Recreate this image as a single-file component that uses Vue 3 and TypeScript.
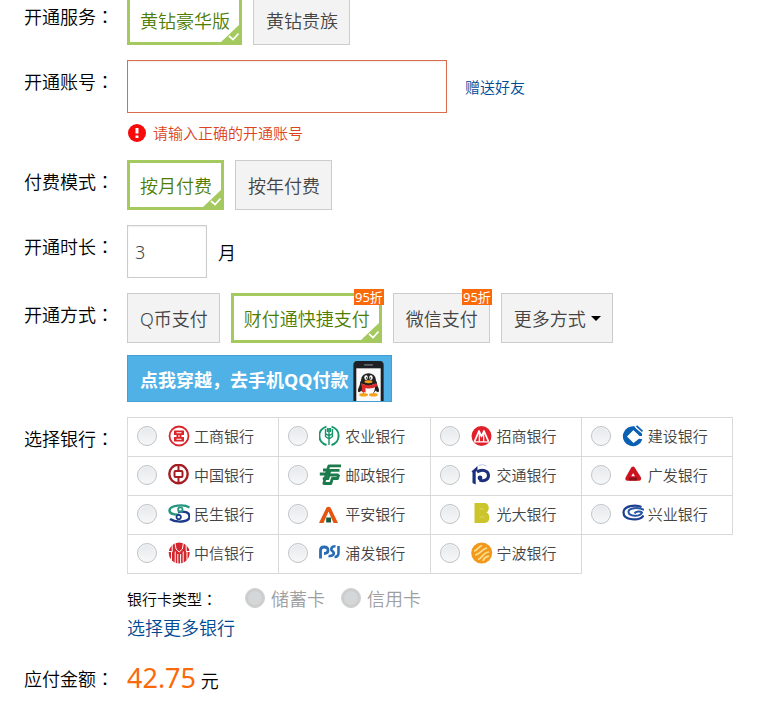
<script setup lang="ts">
import { ref } from 'vue'

interface Option {
  id: string
  label: string
  badge?: string
}

interface Shape {
  d: string
  fill?: string
  stroke?: string
  w?: number
}

interface Bank {
  id: string
  name: string
  icon: Shape[]
}

const services: Option[] = [
  { id: 'luxury', label: '黄钻豪华版' },
  { id: 'noble', label: '黄钻贵族' },
]
const modes: Option[] = [
  { id: 'month', label: '按月付费' },
  { id: 'year', label: '按年付费' },
]
const channels: Option[] = [
  { id: 'qcoin', label: 'Q币支付' },
  { id: 'tenpay', label: '财付通快捷支付', badge: '95折' },
  { id: 'wechat', label: '微信支付', badge: '95折' },
]

const circle = (cx: number, cy: number, r: number): string =>
  `M${cx - r} ${cy}a${r} ${r} 0 1 0 ${2 * r} 0a${r} ${r} 0 1 0 ${-2 * r} 0z`

const banks: Bank[] = [
  {
    id: 'icbc',
    name: '工商银行',
    icon: [
      { d: circle(11, 11, 9.5), stroke: '#d9252b', w: 1.8 },
      { d: 'M6 5.5h10v4.5h-2.5v2h2.5v4.5h-10v-4.5h2.5v-2h-2.5z', fill: '#d9252b' },
      { d: 'M8.5 7.8h5M8.5 14.2h5M11 10v2', stroke: '#fff', w: 1.1 },
    ],
  },
  {
    id: 'abc',
    name: '农业银行',
    icon: [
      { d: 'M7.5 1.6a9.5 9.5 0 0 0 0 18.4M12.5 1.6a9.5 9.5 0 0 1 0 18.4', stroke: '#16946b', w: 2 },
      { d: 'M10 3v17M6.5 4v4.5l3.5 2.5 3.5-2.5v-4.5M6.5 8.5v3l3.5 2.5 3.5-2.5v-3M8.5 3v4M11.5 3v4', stroke: '#16946b', w: 1.4 },
    ],
  },
  {
    id: 'cmb',
    name: '招商银行',
    icon: [
      { d: circle(10.5, 11, 10), fill: '#e0202a' },
      { d: 'M3.5 16.5l4.5-10.5 2.5 5.5 2.5-5.5 4.5 10.5', stroke: '#fff', w: 1.8 },
      { d: 'M8.3 9v7.5M12.7 9v7.5M3 16.8h15', stroke: '#fff', w: 1.2 },
    ],
  },
  {
    id: 'ccb',
    name: '建设银行',
    icon: [
      { d: 'M13 1.4a10 10 0 1 0 7.4 12.8l-3.4-.4-5.500 4.200-6.500-6.500 6.500-6.500 3 2.800z', fill: '#0b60b4' },
      { d: 'M11.500 1.500l8.500 7v2.500h-2.500l-6.500-6.500z', fill: '#0b60b4' },
      { d: 'M14.500 .8l6 5.500', stroke: '#0b60b4', w: 1.8 },
    ],
  },
  {
    id: 'boc',
    name: '中国银行',
    icon: [
      { d: circle(10.5, 10, 9.2), stroke: '#a51c20', w: 2.4 },
      { d: 'M7.5 7h6q1 0 1 1v4q0 1-1 1h-6q-1 0-1-1v-4q0-1 1-1z', stroke: '#a51c20', w: 2 },
      { d: 'M10.5 .5v6M10.5 13.5v6', stroke: '#a51c20', w: 2 },
    ],
  },
  {
    id: 'post',
    name: '邮政银行',
    icon: [
      { d: 'M22 1.8h-12l-1.500 4.200h-4.500M20.500 6.300h-9.500l-1.200 3.700h-9M19.500 11h-9.500l-1.200 3.700h-5', stroke: '#1c7a4c', w: 2.800 },
      { d: 'M8.500 5.500l-3.700 14h7l1.500-5h5.200l1.300-4', stroke: '#1c7a4c', w: 2.800 },
    ],
  },
  {
    id: 'bocom',
    name: '交通银行',
    icon: [
      { d: 'M.5 7.500l6-5.500v4.200l-1.800 1.600v12.700l-3.200-1.500v-10.500z', fill: '#1c2f7a' },
      { d: 'M6 8c5-3.500 11.500-1.500 11.500 3.500 0 4.500-5 6.500-9 4.500', stroke: '#1c2f7a', w: 3 },
      { d: 'M7.500 1.500q4.500-2 8 .5', stroke: '#b9c5e2', w: 1 },
      { d: circle(9, 14, 2.4), fill: '#1c2f7a' },
    ],
  },
  {
    id: 'gdb',
    name: '广发银行',
    icon: [
      { d: 'M11 4.800l-5.500 9.700h11.500z', stroke: '#cc1420', w: 4.400 },
      { d: 'M7 15h8', stroke: '#8e0f18', w: 3 },
    ],
  },
  {
    id: 'cmbc',
    name: '民生银行',
    icon: [
      { d: 'M21.500 4.500c-5-3.500-20-2.500-20 3 0 4 6 4 10 4.500', stroke: '#27967f', w: 2.400 },
      { d: 'M10 9c6-1 11.500 0 11.500 4.500 0 6-13.500 6.500-19.500 2.500', stroke: '#1c3b8a', w: 2.400 },
      { d: circle(12.3, 6.6, 2.2), stroke: '#27967f', w: 1.8 },
      { d: circle(10.7, 14, 2.2), stroke: '#1c3b8a', w: 1.8 },
    ],
  },
  {
    id: 'pingan',
    name: '平安银行',
    icon: [
      { d: 'M0 20l7.500-15.500q2-1.500 4 0l7.500 15.500h-4.500l-5-11.500-5 11.500z', fill: '#e6540f' },
      { d: 'M7.200 14.500h4.800v5h-4.800z', fill: '#155c40' },
    ],
  },
  {
    id: 'ceb',
    name: '光大银行',
    icon: [
      { d: 'M3.500 0h10c5 0 5.500 7.500 2 9.500 4.500 2 3.500 10.500-1.500 10.500h-10.500z', fill: '#cbc52b' },
      { d: 'M8.500 6h4M8.500 14h5', stroke: '#dbd66a', w: 1.2 },
    ],
  },
  {
    id: 'cib',
    name: '兴业银行',
    icon: [
      { d: 'M19.500 4c-6-3-18-1-18 5.500 0 8 16 9 20 3', stroke: '#1c3f8f', w: 2.200 },
      { d: 'M22 6.800c-6-3-15.500-1.800-15.500 2 0 5 11.500 5.200 13.500 .8-2-1.800-6-1.200-7.500 .8', stroke: '#2555a3', w: 2 },
    ],
  },
  {
    id: 'citic',
    name: '中信银行',
    icon: [
      { d: circle(11.2, 11, 10.5), fill: '#d5262e' },
      { d: 'M4.200 3v6M3.500 10v9M7 1l1 6 3.200 3 3.200-3 1-6M7.200 9.500v12M15.200 9.500v12M9.800 12v10M12.600 12v10M18.200 3v6M19 10v9M0 9.500h4.500M18 9.500h4.500', stroke: '#fff', w: 1 },
    ],
  },
  {
    id: 'spdb',
    name: '浦发银行',
    icon: [
      { d: 'M1.500 16.500v-8q0-3.500 3.500-3.500 4 0 4 3.500 0 3-4 3', stroke: '#2a6cb4', w: 2.800 },
      { d: 'M16.500 4.200c-5 0-5 4-2.500 5.500 2 2-.5 5-4.500 4.200M19.500 4v6.500q0 4.500-4 4.500', stroke: '#2a6cb4', w: 2.600 },
    ],
  },
  {
    id: 'nbcb',
    name: '宁波银行',
    icon: [
      { d: circle(10.7, 11, 10.5), fill: '#f2981f' },
      { d: 'M3 9c3 0 4-4 8-5.500M4 13c5 0 6-6 12-7M7 17.500c5-1 4-7 11-7.500M12 19c1-4 3-4 6-5', stroke: '#fbe08a', w: 1.7 },
    ],
  },
]

const service = ref('luxury')
const mode = ref('month')
const channel = ref('tenpay')
const account = ref('')
const months = ref('3')
const bank = ref('')
</script>

<template>
  <form class="form" @submit.prevent>
    <div class="row">
      <span class="label">开通服务<i class="colon">：</i></span>
      <div class="options">
        <div v-for="o in services" :key="o.id" class="choice">
          <button type="button" class="option" :class="{ selected: service === o.id }" :aria-pressed="service === o.id" @click="service = o.id">
            {{ o.label }}
            <svg v-if="service === o.id" class="tick" viewBox="0 0 18 17" aria-hidden="true"><path d="M0 17L18 0v17z" fill="#a3c95f" /><path d="M8 11l4 3.500 5.500-6" fill="none" stroke="#fff" stroke-width="1.700" /></svg>
          </button>
        </div>
      </div>
    </div>

    <div class="row">
      <label class="label" for="account">开通账号<i class="colon">：</i></label>
      <div class="field">
        <div class="line">
          <input id="account" v-model="account" type="text" class="input account" aria-invalid="true" aria-describedby="account-error" />
          <a href="#" class="gift">赠送好友</a>
        </div>
        <p id="account-error" class="error">
          <svg class="alert" viewBox="0 0 18 18" aria-hidden="true"><circle cx="9" cy="9" r="9" fill="#f60a0a" /><path d="M9 4v5.500M9 11.500v2.500" stroke="#fff" stroke-width="3" /></svg>
          请输入正确的开通账号
        </p>
      </div>
    </div>

    <div class="row">
      <span class="label">付费模式<i class="colon">：</i></span>
      <div class="options">
        <div v-for="o in modes" :key="o.id" class="choice">
          <button type="button" class="option" :class="{ selected: mode === o.id }" :aria-pressed="mode === o.id" @click="mode = o.id">
            {{ o.label }}
            <svg v-if="mode === o.id" class="tick" viewBox="0 0 18 17" aria-hidden="true"><path d="M0 17L18 0v17z" fill="#a3c95f" /><path d="M8 11l4 3.500 5.500-6" fill="none" stroke="#fff" stroke-width="1.700" /></svg>
          </button>
        </div>
      </div>
    </div>

    <div class="row">
      <label class="label" for="months">开通时长<i class="colon">：</i></label>
      <div class="line">
        <input id="months" v-model="months" type="text" class="input months" />
        <span class="unit">月</span>
      </div>
    </div>

    <div class="row">
      <span class="label">开通方式<i class="colon">：</i></span>
      <div class="field">
        <div class="options">
          <div v-for="o in channels" :key="o.id" class="choice">
            <button type="button" class="option" :class="{ selected: channel === o.id }" :aria-pressed="channel === o.id" @click="channel = o.id">
              {{ o.label }}
              <svg v-if="channel === o.id" class="tick" viewBox="0 0 18 17" aria-hidden="true"><path d="M0 17L18 0v17z" fill="#a3c95f" /><path d="M8 11l4 3.500 5.500-6" fill="none" stroke="#fff" stroke-width="1.700" /></svg>
            </button>
            <span v-if="o.badge" class="badge">{{ o.badge }}</span>
          </div>
          <div class="choice">
            <button type="button" class="option more" aria-haspopup="menu">更多方式<span class="caret" /></button>
          </div>
        </div>
        <a href="#" class="banner">
          点我穿越，去手机QQ付款
          <svg class="phone" viewBox="0 0 31 41" aria-hidden="true">
            <path d="M0 41V4q0-4 4-4h23q4 0 4 4v37z" fill="#1d2024" />
            <path d="M11 4h9" stroke="#6d7278" stroke-width="1.500" />
            <path d="M3 7.500h25V41H3z" fill="#fafafa" />
            <path d="M8 23c-4 5-4 9-2 9l3-2zM23 23c4 5 4 9 2 9l-3-2z" fill="#222" />
            <ellipse cx="15.500" cy="25" rx="9" ry="9.500" fill="#222" />
            <ellipse cx="15.500" cy="28" rx="6.500" ry="7" fill="#fff" />
            <ellipse cx="15.500" cy="19" rx="7.500" ry="6.500" fill="#222" />
            <ellipse cx="13" cy="17" rx="1.800" ry="2.500" fill="#fff" />
            <ellipse cx="18" cy="17" rx="1.800" ry="2.500" fill="#fff" />
            <circle cx="13.500" cy="17.500" r=".8" fill="#111" />
            <circle cx="17.500" cy="17.500" r=".8" fill="#111" />
            <ellipse cx="15.500" cy="21.200" rx="4" ry="1.500" fill="#f4a11c" />
            <path d="M7.500 22.500q8 4.500 16 0l1 3q-6 4-12 2.200v4.500l-3.800-.7v-5z" fill="#dc2b2b" />
            <ellipse cx="10.500" cy="34.500" rx="4.500" ry="1.800" fill="#f4a11c" />
            <ellipse cx="20.500" cy="34.500" rx="4.500" ry="1.800" fill="#f4a11c" />
          </svg>
        </a>
      </div>
    </div>

    <div class="row">
      <span id="bank-label" class="label">选择银行<i class="colon">：</i></span>
      <div class="field">
        <ul class="banks" role="radiogroup" aria-labelledby="bank-label">
          <li v-for="b in banks" :key="b.id" class="cell">
            <label class="bank">
              <input v-model="bank" type="radio" name="bank" :value="b.id" class="radio" />
              <svg class="logo" viewBox="0 0 22 22" aria-hidden="true">
                <path v-for="(s, i) in b.icon" :key="i" :d="s.d" :fill="s.fill ?? 'none'" :stroke="s.stroke ?? 'none'" :stroke-width="s.w ?? 0" stroke-linejoin="round" />
              </svg>
              <span>{{ b.name }}</span>
            </label>
          </li>
        </ul>
        <div class="cards" role="radiogroup" aria-labelledby="card-label">
          <span id="card-label" class="card-title">银行卡类型<i class="colon">：</i></span>
          <label class="card"><input type="radio" name="card" value="debit" class="radio" disabled />储蓄卡</label>
          <label class="card"><input type="radio" name="card" value="credit" class="radio" disabled />信用卡</label>
        </div>
        <a href="#" class="more-banks">选择更多银行</a>
      </div>
    </div>

    <div class="row">
      <span class="label">应付金额<i class="colon">：</i></span>
      <p class="total"><strong class="price">42.75</strong> 元</p>
    </div>
  </form>
</template>

<style>
body {
  margin: 0;
  background: #fff;
}
</style>

<style scoped>
.form {
  display: flex;
  flex-direction: column;
  gap: 15px;
  /* The first row is scrolled slightly past the top edge. */
  margin-top: -5px;
  padding: 0 38px 16px 24px;
  color: #000;
  font-family: "Noto Sans", "Noto Sans CJK SC", sans-serif;
  font-size: 18px;
  font-weight: 350;
}

.form *,
.form {
  box-sizing: border-box;
}

.row {
  display: flex;
  align-items: flex-start;
}

.label {
  flex: none;
  width: 103px;
  line-height: 42px;
  white-space: nowrap;
}

.colon {
  font-family: "Noto Sans CJK TC", sans-serif;
  font-style: normal;
}

.field {
  flex: 1;
  min-width: 0;
}

.options {
  display: flex;
  gap: 11px;
}

.line {
  display: flex;
  align-items: center;
}

.choice {
  position: relative;
}

.option {
  position: relative;
  display: flex;
  align-items: center;
  height: 50px;
  padding: 0 11px 0 12px;
  border: 1px solid #ccc;
  background: #f3f3f3;
  color: #444;
  font: inherit;
  white-space: nowrap;
  cursor: pointer;
}

.option.selected {
  padding: 0 9px 0 10px;
  border: 3px solid #a3c95f;
  background: #fff;
  color: #4f7d00;
}

.tick {
  position: absolute;
  right: 0;
  bottom: 0;
  width: 18px;
  height: 17px;
}

.badge {
  position: absolute;
  top: -4px;
  right: -2px;
  padding: 0 1px;
  background: #fa6a0a;
  color: #fff;
  font-size: 13px;
  font-weight: 400;
  line-height: 16px;
}

.more {
  gap: 5px;
}

.caret {
  border: 5px solid transparent;
  border-top-color: #000;
  border-bottom: 0;
}

.input {
  height: 53px;
  padding: 0 7px;
  border: 1px solid #ccc;
  border-radius: 0;
  background: #fff;
  box-shadow: inset 0 1px 2px #eee;
  color: #444;
  font: inherit;
  outline: none;
}

.account {
  width: 320px;
  border-color: #dc6c50;
}

.months {
  width: 80px;
}

.gift {
  margin-left: 18px;
  color: #004a94;
  font-size: 15px;
  text-decoration: none;
}

.unit {
  margin-left: 11px;
}

.error {
  display: flex;
  align-items: center;
  gap: 7px;
  margin: 8px 0 0;
  padding-left: 1px;
  color: #dc4420;
  font-size: 15px;
  line-height: 24px;
}

.alert {
  width: 18px;
  height: 18px;
}

.banner {
  display: flex;
  align-items: center;
  justify-content: space-between;
  width: 265px;
  height: 47px;
  margin-top: 12px;
  padding: 0 7px 0 12px;
  border: 1px solid #469fd2;
  background: #50b1e6;
  color: #fff;
  font-weight: 700;
  text-decoration: none;
  white-space: nowrap;
}

.phone {
  align-self: flex-end;
  flex: none;
  width: 31px;
  height: 40px;
}

.banks {
  display: grid;
  grid-template-columns: repeat(4, 1fr);
  grid-auto-rows: 39px;
  margin: 0;
  padding: 1px 0 0 1px;
  list-style: none;
}

.cell {
  margin: -1px 0 0 -1px;
  border: 1px solid #d9d9d9;
}

.bank {
  display: flex;
  align-items: center;
  height: 35px;
  padding-left: 9px;
  color: #444;
  font-size: 15px;
  white-space: nowrap;
  cursor: pointer;
}

.logo {
  flex: none;
  width: 22px;
  height: 22px;
  margin: 0 4px 0 11px;
}

.radio {
  flex: none;
  width: 20px;
  height: 20px;
  margin: 0;
  border: 1px solid #bfc2c5;
  border-radius: 50%;
  appearance: none;
  background: linear-gradient(#e6e9ec, #f6f7f8);
  box-shadow: inset 0 0 0 1px #f4f5f6;
}

.radio:checked {
  background: radial-gradient(#56830c 4px, #f1f3f4 5px);
}

.radio:disabled {
  border-color: #cfcfcf;
  background: #d5d6d7;
  box-shadow: inset 0 0 0 2px #cbccce;
}

.cards {
  display: flex;
  align-items: center;
  height: 32px;
  margin-top: 8px;
}

.card-title {
  margin-right: 28px;
  font-size: 15px;
}

.card {
  display: flex;
  align-items: center;
  gap: 6px;
  margin-right: 16px;
  color: #a0a0a0;
}

.more-banks {
  display: block;
  width: fit-content;
  color: #004a94;
  line-height: 28px;
  text-decoration: none;
}

.total {
  margin: 0;
  line-height: 42px;
}

.price {
  color: #fa6a0a;
  font-size: 27px;
  font-weight: 400;
}
</style>
